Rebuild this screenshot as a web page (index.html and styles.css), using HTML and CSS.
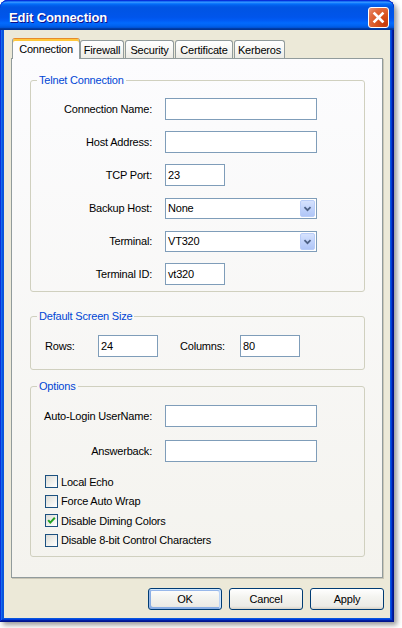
FILE: index.html
```html
<!DOCTYPE html>
<html>
<head>
<meta charset="utf-8">
<link rel="stylesheet" href="styles.css">
</head>
<body>
<div class="window">
  <div class="titlebar">
    <span class="title">Edit Connection</span>
    <div class="close">
      <svg width="19" height="19" viewBox="0 0 19 19"><path d="M5.5 5.5 L13.5 13.5 M13.5 5.5 L5.5 13.5" stroke="#fff" stroke-width="2.6" stroke-linecap="square" fill="none"/></svg>
    </div>
  </div>
  <div class="frame">
    <div class="tabs">
      <div class="tab tab-active">Connection</div>
      <div class="tab tab-fw">Firewall</div>
      <div class="tab tab-sec">Security</div>
      <div class="tab tab-cert">Certificate</div>
      <div class="tab tab-kerb">Kerberos</div>
    </div>
    <div class="panel">
      <fieldset class="group">
        <legend>Telnet Connection</legend>
        <div class="form-grid grid-telnet">
          <div class="lbl">Connection Name:</div><div class="field field-long"></div>
          <div class="lbl">Host Address:</div><div class="field field-long"></div>
          <div class="lbl">TCP Port:</div><div class="field field-short">23</div>
          <div class="lbl">Backup Host:</div>
          <div class="combo"><span class="combo-value">None</span><span class="combo-btn"><svg width="15" height="17" viewBox="0 0 15 17"><path d="M4 7 L7.5 10.5 L11 7" stroke="#4d6185" stroke-width="2" fill="none"/></svg></span></div>
          <div class="lbl">Terminal:</div>
          <div class="combo"><span class="combo-value">VT320</span><span class="combo-btn"><svg width="15" height="17" viewBox="0 0 15 17"><path d="M4 7 L7.5 10.5 L11 7" stroke="#4d6185" stroke-width="2" fill="none"/></svg></span></div>
          <div class="lbl">Terminal ID:</div><div class="field field-short">vt320</div>
        </div>
      </fieldset>
      <fieldset class="group group-size">
        <legend>Default Screen Size</legend>
        <div class="size-row">
          <span class="size-lbl">Rows:</span><div class="field field-short">24</div>
          <span class="size-lbl size-lbl-cols">Columns:</span><div class="field field-short">80</div>
        </div>
      </fieldset>
      <fieldset class="group group-options">
        <legend>Options</legend>
        <div class="form-grid grid-options">
          <div class="lbl">Auto-Login UserName:</div><div class="field field-long"></div>
          <div class="lbl">Answerback:</div><div class="field field-long"></div>
        </div>
        <div class="checks">
          <div class="check-row"><span class="checkbox"></span><span>Local Echo</span></div>
          <div class="check-row"><span class="checkbox"></span><span>Force Auto Wrap</span></div>
          <div class="check-row"><span class="checkbox"><svg width="11" height="11" viewBox="0 0 11 11"><path d="M2.2 5.2 L4.3 7.6 L8.8 2.8" stroke="#21a121" stroke-width="2" fill="none"/></svg></span><span>Disable Diming Colors</span></div>
          <div class="check-row"><span class="checkbox"></span><span>Disable 8-bit Control Characters</span></div>
        </div>
      </fieldset>
    </div>
    <div class="buttons">
      <div class="btn btn-default">OK</div>
      <div class="btn">Cancel</div>
      <div class="btn">Apply</div>
    </div>
  </div>
</div>
</body>
</html>
```

FILE: styles.css
```css
html, body {
  margin: 0;
  padding: 0;
  background: #ffffff;
}
body {
  width: 402px;
  height: 628px;
  font-family: "Liberation Sans", Arial, sans-serif;
  font-size: 11px;
  letter-spacing: -0.2px;
  color: #000;
}
.window {
  width: 394px;
  height: 622px;
  box-sizing: border-box;
  display: flex;
  flex-direction: column;
  background: #0855dd;
  border-radius: 8px 8px 0 0;
  box-shadow: inset -1px -1px #00138c, inset 1px 1px #0831d9, inset -2px -2px #001ea0, inset 2px 2px #166aee, inset -3px -3px #003bda, inset 3px 3px #0855dd, 3px 3px 5px rgba(0, 0, 0, 0.4);
}
.titlebar {
  height: 30px;
  box-sizing: border-box;
  padding: 4px 5px 0 9px;
  display: flex;
  align-items: center;
  justify-content: space-between;
  border-radius: 8px 8px 0 0;
  border-top: 1px solid #0831d9;
  background: linear-gradient(180deg, #0058ee 0%, #3a93ff 4%, #288eff 6%, #127dff 8%, #036ffc 10%, #0262ee 14%, #0057e5 20%, #0054e3 24%, #0055eb 56%, #005bf5 66%, #026afe 76%, #0062ef 86%, #0052d6 92%, #0040ab 94%, #003092 100%);
}
.title {
  color: #fff;
  font-weight: bold;
  font-size: 13px;
  letter-spacing: -0.1px;
  text-shadow: 1px 1px #0f1089;
}
.close {
  width: 21px;
  height: 21px;
  box-sizing: border-box;
  border: 1px solid #fff;
  border-radius: 3px;
  background: radial-gradient(circle at 85% 85%, #c73a0a 0%, #d9541f 40%, #e06a3e 70%, #e9957a 100%);
  display: flex;
  align-items: center;
  justify-content: center;
}
.frame {
  flex: 1;
  margin: 0 4px 4px;
  background: #ece9d8;
  padding: 8px 7px 8px;
  display: flex;
  flex-direction: column;
}
.tabs {
  height: 20px;
  display: flex;
  align-items: flex-end;
  padding-left: 1px;
}
.tab {
  height: 18px;
  box-sizing: border-box;
  border: 1px solid #919b9c;
  border-bottom: none;
  border-radius: 3px 3px 0 0;
  background: linear-gradient(180deg, #ffffff 0%, #f7f7f4 50%, #ecebe5 100%);
  display: flex;
  align-items: center;
  justify-content: center;
  margin-right: 1px;
  padding-top: 1px;
}
.tab-active {
  position: relative;
  z-index: 1;
  height: 21px;
  width: 68px;
  margin-bottom: -1px;
  margin-right: 0;
  background: #fcfcfe;
  border-top: 1px solid #e68b2c;
  box-shadow: inset 0 2px #ffc83c;
  padding-top: 0;
}
.tab-fw { width: 44px; }
.tab-sec { width: 49px; }
.tab-cert { width: 58px; }
.tab-kerb { width: 51px; }
.panel {
  height: 520px;
  box-sizing: border-box;
  border: 1px solid #919b9c;
  box-shadow: 1px 1px 0 #c9c6b6;
  background: linear-gradient(180deg, #fcfcfe 0%, #f4f3ee 100%);
  padding: 15px 17px 0 18px;
}
.group {
  margin: 0;
  padding: 0;
  border: 1px solid #d0d0bf;
  border-radius: 3px;
  min-width: 0;
}
.group legend {
  padding: 0 2px;
  margin-left: 6px;
  line-height: 13px;
  color: #0046d5;
}
.group-size { margin-top: 18px; }
.group-options { margin-top: 10px; }
.form-grid {
  display: grid;
  grid-template-columns: 121px auto;
  grid-auto-rows: 22px;
  column-gap: 13px;
  align-items: center;
  justify-items: start;
}
.grid-telnet {
  row-gap: 11px;
  padding: 11px 0 6px;
}
.grid-options {
  row-gap: 13px;
  padding-top: 12px;
}
.lbl {
  justify-self: end;
  text-align: right;
  white-space: nowrap;
}
.field {
  height: 22px;
  box-sizing: border-box;
  border: 1px solid #7f9db9;
  background: #fff;
  padding-left: 2px;
  line-height: 20px;
}
.field-long { width: 152px; }
.field-short { width: 60px; }
.combo {
  width: 152px;
  height: 21px;
  box-sizing: border-box;
  border: 1px solid #7f9db9;
  background: #fff;
  display: flex;
  align-items: stretch;
}
.combo-value {
  flex: 1;
  padding-left: 2px;
  line-height: 19px;
}
.combo-btn {
  width: 15px;
  margin: 1px;
  box-sizing: border-box;
  border: 1px solid #b9cdf8;
  border-radius: 2px;
  background: linear-gradient(180deg, #d6e2fd 0%, #c1d3fb 50%, #b0c6f7 100%);
  display: flex;
  align-items: center;
  justify-content: center;
}
.size-row {
  display: flex;
  align-items: center;
  padding: 12px 0 12px 14px;
}
.size-lbl { width: 53px; }
.size-lbl-cols {
  width: 60px;
  margin-left: 22px;
}
.checks {
  display: flex;
  flex-direction: column;
  gap: 6.5px;
  padding: 13px 0 9.5px 14px;
}
.check-row {
  height: 13px;
  display: flex;
  align-items: center;
  gap: 3px;
}
.checkbox {
  width: 13px;
  height: 13px;
  box-sizing: border-box;
  border: 1px solid #1c5180;
  background: linear-gradient(135deg, #dcdcd7 0%, #f2f2ef 60%, #ffffff 100%);
  display: flex;
  align-items: center;
  justify-content: center;
}
.buttons {
  display: flex;
  justify-content: flex-end;
  gap: 7px;
  margin-top: 10px;
  margin-right: -1px;
}
.btn {
  width: 74px;
  height: 22px;
  box-sizing: border-box;
  border: 1px solid #003c74;
  border-radius: 3px;
  background: linear-gradient(180deg, #ffffff 0%, #f4f4f0 40%, #ecebe6 86%, #d6d0c5 100%);
  display: flex;
  align-items: center;
  justify-content: center;
}
.btn-default {
  box-shadow: inset -1px 1px #cee7ff, inset 1px 2px #98b8ea, inset -2px 2px #bcd4f6, inset 1px -1px #89ade4, inset 2px -2px #89ade4;
}
```
